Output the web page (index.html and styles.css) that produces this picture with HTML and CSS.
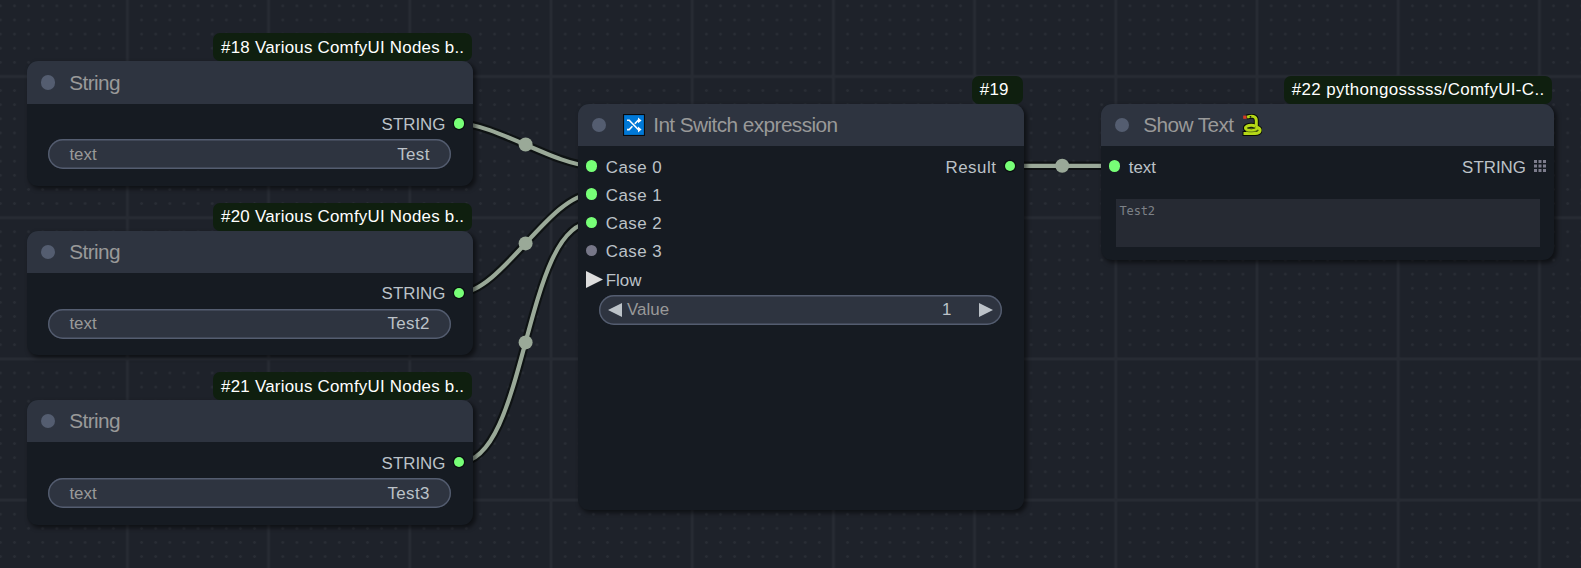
FILE: index.html
```
<!DOCTYPE html>
<html lang="en">
<head>
<meta charset="utf-8">
<title>Node graph</title>
<link rel="stylesheet" href="styles.css">
</head>
<body>
<main class="canvas">
  <svg class="layer" width="1581" height="568" viewBox="0 0 1581 568">
    <defs>
      <pattern id="dots" x="-20.8" y="-71.8" width="14.12" height="14.12" patternUnits="userSpaceOnUse">
        <path class="dot" d="M5.6 7.06h2.9M7.06 5.6v2.9"/>
      </pattern>
      <pattern id="grid" x="-84.4" y="-135.3" width="141.2" height="141.2" patternUnits="userSpaceOnUse">
        <path class="gap" d="M70.6 0V141.2M0 70.6H141.2"/>
        <path class="line" d="M70.6 0V141.2M0 70.6H141.2"/>
      </pattern>
    </defs>
    <rect width="1581" height="568" fill="url(#dots)"/>
    <rect width="1581" height="568" fill="url(#grid)"/>
    <g class="link-shadow">
      <path d="M459 123.5C494 123.5 557 166 592 166"/>
      <path d="M459 293C501 293 550 194 592 194"/>
      <path d="M459 462.3C527.5 462.3 523.5 222.5 592 222.5"/>
      <path d="M1010 165.8H1114"/>
    </g>
    <g class="link">
      <path d="M459 123.5C494 123.5 557 166 592 166"/>
      <path d="M459 293C501 293 550 194 592 194"/>
      <path d="M459 462.3C527.5 462.3 523.5 222.5 592 222.5"/>
      <path d="M1010 165.8H1114"/>
    </g>
    <g class="link-dot">
      <circle cx="525.6" cy="144.5" r="7"/>
      <circle cx="525.6" cy="243.4" r="7"/>
      <circle cx="525.6" cy="342.4" r="7"/>
      <circle cx="1062.2" cy="165.8" r="7"/>
    </g>
  </svg>

  <section class="node node-18">
    <div class="badge"><span>#18 Various ComfyUI Nodes b..</span></div>
    <header class="title"><i class="knob"></i><span>String</span></header>
    <div class="body">
      <div class="row end"><span class="type">STRING</span><i class="slot out"></i></div>
      <div class="widget"><span class="name">text</span><span class="value">Test</span></div>
    </div>
  </section>

  <section class="node node-20">
    <div class="badge"><span>#20 Various ComfyUI Nodes b..</span></div>
    <header class="title"><i class="knob"></i><span>String</span></header>
    <div class="body">
      <div class="row end"><span class="type">STRING</span><i class="slot out"></i></div>
      <div class="widget"><span class="name">text</span><span class="value">Test2</span></div>
    </div>
  </section>

  <section class="node node-21">
    <div class="badge"><span>#21 Various ComfyUI Nodes b..</span></div>
    <header class="title"><i class="knob"></i><span>String</span></header>
    <div class="body">
      <div class="row end"><span class="type">STRING</span><i class="slot out"></i></div>
      <div class="widget"><span class="name">text</span><span class="value">Test3</span></div>
    </div>
  </section>

  <section class="node node-19">
    <div class="badge badge-short"><span>#19</span></div>
    <header class="title"><i class="knob"></i>
      <svg class="shuffle" width="22" height="22" viewBox="0 0 22 22">
        <rect x=".5" y=".5" width="21" height="21" fill="#0078d7" stroke="#080a0d" stroke-width="1.2"/>
        <g fill="none" stroke="#fff" stroke-width="1.6">
          <path d="M4 6.3h2.2l9 9.2h1.3M4 15.6h2.2l3.2-3.3M11.8 9.8l3.4-3.5h1.3"/>
        </g>
        <path d="M15 3.5l3.6 2.9L15 9.3zM15 12.6l3.6 2.9L15 18.4z" fill="#fff"/>
      </svg>
      <span>Int Switch expression</span></header>
    <div class="body">
      <div class="row"><i class="slot"></i><span class="input">Case 0</span><span class="result">Result</span><i class="slot out"></i></div>
      <div class="row"><i class="slot"></i><span class="input">Case 1</span></div>
      <div class="row"><i class="slot"></i><span class="input">Case 2</span></div>
      <div class="row"><i class="slot idle"></i><span class="input">Case 3</span></div>
      <div class="row flow"><svg width="17" height="17" viewBox="0 0 17 17"><path d="M0 0L17 8.5L0 17z" fill="#ddd"/></svg><span>Flow</span></div>
      <div class="widget number">
        <svg width="14" height="14" viewBox="0 0 14 14"><path d="M14 0L0 7l14 7z" fill="#bcc2c8"/></svg>
        <span class="name">Value</span><span class="value">1</span>
        <svg width="14" height="14" viewBox="0 0 14 14"><path d="M0 0l14 7L0 14z" fill="#bcc2c8"/></svg>
      </div>
    </div>
  </section>

  <section class="node node-22">
    <div class="badge badge-wide"><span>#22 pythongosssss/ComfyUI-C..</span></div>
    <header class="title"><i class="knob"></i><span>Show Text</span>
      <svg class="snake" width="20" height="22" viewBox="0 0 20 22">
        <g fill="none" stroke-linejoin="round">
          <path class="snake-edge" d="M.5 19.5H13C19 19.3 19.300 15 15.500 13.500M4.500 3.200C9.500 1.500 14.300 1.500 14.300 6.500V11"/>
          <ellipse class="snake-edge" cx="9.2" cy="14" rx="5.8" ry="2.7"/>
          <path class="snake-skin" d="M1.5 19.500H13C19 19.300 19.300 15 15.500 13.500M5 3.200C9.500 1.500 14.300 1.500 14.300 6.500V12.500"/>
          <ellipse class="snake-skin" cx="9.2" cy="14" rx="5.8" ry="2.7"/>
          <path d="M4 17.200C7 18.300 13 18.300 16 16M6.500 14C9 14.800 12 14.400 13.500 12.800" stroke="#5d7910" stroke-width=".9"/>
        </g>
        <path d="M1.200 1.600h3.300v3.200H1.200z" fill="#d83a24"/>
        <circle cx="8.500" cy="2.800" r=".9" fill="#10140a"/>
      </svg>
    </header>
    <div class="body">
      <div class="row"><i class="slot"></i><span>text</span><span class="result type">STRING</span>
        <svg class="list" width="12" height="12" viewBox="0 0 12 12"><path d="M0 1.5H12M0 6H12M0 10.5H12" stroke="#7c7c8c" stroke-width="3" stroke-dasharray="3 1.5"/></svg>
      </div>
      <div class="textarea">Test2</div>
    </div>
  </section>
</main>
</body>
</html>
```
FILE: styles.css
```
* { box-sizing: border-box; }
body { margin: 0; background: #1e222a; }
.canvas {
  position: relative;
  width: 1581px;
  height: 568px;
  overflow: hidden;
  font-family: "Liberation Sans", Arial, sans-serif;
  font-size: 16.9px;
  color: #bcc2c8;
  white-space: nowrap;
}
.layer { position: absolute; left: 0; top: 0; }
.dot { stroke: #292d35; stroke-width: 1.4; }
.gap { stroke: #1e222a; stroke-width: 8; fill: none; }
.line { stroke: #272b33; stroke-width: 2.8; fill: none; }
.link-shadow { fill: none; stroke: rgba(9, 13, 12, .75); stroke-width: 8.5; }
.link { fill: none; stroke: #9aa998; stroke-width: 4.2; }
.link-dot { fill: #9aa998; }

.node {
  position: absolute;
  display: flex;
  flex-direction: column;
  width: 446.3px;
  background: #161b22;
  border-radius: 11px;
  box-shadow: 2.5px 2.5px 4px rgba(0, 0, 0, .5);
}
.node-18 { left: 27px; top: 61.4px; height: 124.5px; }
.node-20 { left: 27px; top: 230.9px; height: 124.5px; }
.node-21 { left: 27px; top: 400.2px; height: 124.5px; }
.node-19 { left: 578px; top: 103.9px; height: 406px; }
.node-22 { left: 1101px; top: 103.9px; width: 453px; height: 156px; }

.badge {
  position: absolute;
  right: 1.5px;
  bottom: 100%;
  height: 28px;
  padding: 1px 7.5px 0 8px;
  border-radius: 7px;
  background: #0f1f0f;
  color: #fff;
  line-height: 28px;
  letter-spacing: .24px;
}
.node-20 .badge, .badge-short, .badge-wide { padding-top: 0; }
.badge-short { width: 51px; }
.badge-wide { letter-spacing: .36px; right: 2px; }

.title {
  display: flex;
  align-items: center;
  flex: none;
  height: 42.3px;
  padding-left: 14px;
  border-radius: 11px 11px 0 0;
  background: #2e3440;
  color: #999;
  font-size: 20.8px;
  letter-spacing: -.58px;
}
.knob {
  width: 14.2px;
  height: 14.2px;
  margin-right: 14px;
  border-radius: 50%;
  background: #545d70;
}
.shuffle { margin: 0 8px 0 3px; }
.snake { margin-left: 8px; }
.snake-edge { stroke: #090c08; stroke-width: 5; }
.snake-skin { stroke: #b5d817; stroke-width: 3; }

.body { padding-top: 6.4px; }
.row {
  display: flex;
  align-items: center;
  height: 28.2px;
  padding: 0 8.4px 0 8.1px;
}
.row span { position: relative; top: .8px; }
.node-19 .row span, .node-22 .row span { top: 1.2px; }
.input { letter-spacing: .45px; }
.end { justify-content: flex-end; }
.slot {
  width: 11.4px;
  height: 11.4px;
  margin-right: 8.3px;
  border-radius: 50%;
  background: #7f7;
  position: relative;
  top: -.7px;
}
.slot.idle { background: #778; }
.slot.out {
  width: 10.4px;
  height: 10.4px;
  margin: 0 .8px 0 8.3px;
  box-shadow: 0 0 0 1.2px #0a0e10;
}
.result { margin-left: auto; letter-spacing: .5px; }
.type { letter-spacing: 0; }
.flow svg { margin-right: 2.7px; }
.list { margin: -2px 0 0 7.7px; }

.widget {
  display: flex;
  align-items: center;
  justify-content: space-between;
  height: 30px;
  margin: 1px 22.1px 0 20.6px;
  padding: 1px 21.5px 0 21.8px;
  border-radius: 15px;
  box-shadow: inset 0 0 0 1.4px #545d70;
  background: #2e3440;
}
.name { color: #999; }
.value { letter-spacing: .35px; }
.number { padding: 0 9.5px 0 9px; }
.number .name { margin-left: 5.5px; }
.number .value { margin: 0 27px 0 auto; }

.textarea {
  height: 48px;
  margin: 18px 14px 0 15px;
  padding: 5px 3.5px;
  background: #262a33;
  color: #7d8187;
  font: 12px/14px "DejaVu Sans Mono", monospace;
  letter-spacing: -.15px;
}
```
